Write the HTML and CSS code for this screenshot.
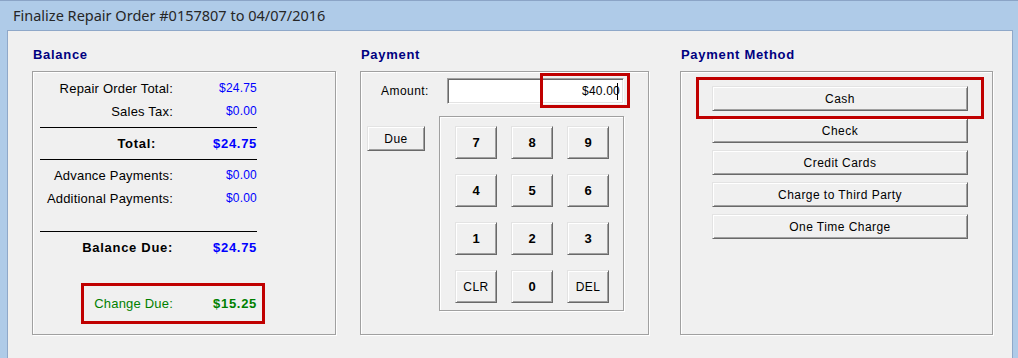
FILE: index.html
```html
<!DOCTYPE html>
<html>
<head>
<meta charset="utf-8">
<title>Finalize Repair Order</title>
<link rel="stylesheet" href="styles.css">
</head>
<body>
<div class="frame">
  <div class="titlebar">Finalize Repair Order #0157807 to 04/07/2016</div>
  <div class="client">
    <section class="group col-balance">
      <h2 class="group-title">Balance</h2>
      <div class="group-box">
        <div class="bal">
          <div class="row"><span class="lbl">Repair Order Total:</span><span class="val">$24.75</span></div>
          <div class="row"><span class="lbl">Sales Tax:</span><span class="val">$0.00</span></div>
          <div class="rule r1"></div>
          <div class="row strong r-after"><span class="lbl lbl-total">Total:</span><span class="val">$24.75</span></div>
          <div class="rule r1"></div>
          <div class="row r-after"><span class="lbl">Advance Payments:</span><span class="val">$0.00</span></div>
          <div class="row"><span class="lbl">Additional Payments:</span><span class="val">$0.00</span></div>
          <div class="rule r2"></div>
          <div class="row strong r-after"><span class="lbl">Balance Due:</span><span class="val">$24.75</span></div>
          <div class="change">
            <span class="lbl">Change Due:</span><span class="val">$15.25</span>
          </div>
        </div>
      </div>
    </section>

    <section class="group col-payment">
      <h2 class="group-title">Payment</h2>
      <div class="group-box pay">
        <div class="amount-row">
          <span class="amount-label">Amount:</span>
          <div class="amount-wrap">
            <div class="amount-field"><span>$40.00</span><span class="caret"></span></div>
            <div class="highlight hl-amount"></div>
          </div>
        </div>
        <div class="pad-row">
          <button class="btn due">Due</button>
          <div class="keypad">
            <button class="btn key num">7</button>
            <button class="btn key num">8</button>
            <button class="btn key num">9</button>
            <button class="btn key num">4</button>
            <button class="btn key num">5</button>
            <button class="btn key num">6</button>
            <button class="btn key num">1</button>
            <button class="btn key num">2</button>
            <button class="btn key num">3</button>
            <button class="btn key">CLR</button>
            <button class="btn key num">0</button>
            <button class="btn key">DEL</button>
          </div>
        </div>
      </div>
    </section>

    <section class="group col-method">
      <h2 class="group-title">Payment Method</h2>
      <div class="group-box methods">
        <div class="method-wrap">
          <button class="btn method">Cash</button>
          <div class="highlight hl-cash"></div>
        </div>
        <button class="btn method">Check</button>
        <button class="btn method">Credit Cards</button>
        <button class="btn method">Charge to Third Party</button>
        <button class="btn method">One Time Charge</button>
      </div>
    </section>
  </div>
</div>
</body>
</html>
```
FILE: styles.css
```css
* { box-sizing: border-box; }

html, body {
  margin: 0;
  padding: 0;
  height: 358px;
  overflow: hidden;
}

body {
  background: #afcbe8;
  font-family: "Liberation Sans", Arial, sans-serif;
  font-size: 12px;
  letter-spacing: 0.45px;
  color: #000;
}

.frame {
  height: 358px;
  border-top: 1px solid #8ba4c6;
  padding: 0 5px 0 7px;
  display: flex;
  flex-direction: column;
}

.titlebar {
  height: 29px;
  line-height: 29px;
  padding-left: 6px;
  font-family: "Noto Sans", "Open Sans", sans-serif;
  font-size: 14.5px;
  letter-spacing: 0;
  color: #262626;
  white-space: nowrap;
}

.client {
  flex: 1;
  background: #f0f0f0;
  border: 1px solid #8fa8c9;
  border-bottom: 0;
  display: flex;
  padding: 16px 0 0 24px;
  gap: 24px;
}

.col-balance { width: 304px; }
.col-payment { width: 289px; }
.col-method { width: 313px; margin-left: 7px; }

.group-title {
  margin: 0 0 8px 1px;
  height: 16px;
  line-height: 16px;
  font-size: 13px;
  font-weight: bold;
  letter-spacing: 0.7px;
  color: #000080;
}

.group-box {
  height: 264px;
  border: 1px solid #a0a0a0;
  box-shadow: 1px 1px 0 #fff, inset 1px 1px 0 #fff;
}

/* Balance */
.bal {
  padding: 5px 0 0 7px;
}

.row {
  display: grid;
  grid-template-columns: 133px 84px;
  height: 23px;
  line-height: 23px;
}

.lbl {
  text-align: right;
  white-space: nowrap;
  font-size: 13px;
  letter-spacing: 0.2px;
}
.val {
  text-align: right;
  color: #0000ff;
  white-space: nowrap;
  letter-spacing: 0.2px;
}

.row.strong .lbl,
.row.strong .val {
  font-size: 13px;
  font-weight: bold;
  letter-spacing: 0.7px;
}

.lbl-total { padding-right: 17px; }

.rule {
  width: 217px;
  height: 1px;
  background: #000;
}
.rule.r1 { margin-top: 4px; }
.rule.r2 { margin-top: 21px; }
.r-after { margin-top: 4px; }

.change {
  margin: 24px 0 0 41px;
  width: 184px;
  height: 41px;
  border: 3px solid #c00000;
  display: grid;
  grid-template-columns: 89px 84px;
  line-height: 35px;
  color: #008000;
}
.change .val {
  color: #008000;
  font-size: 13px;
  font-weight: bold;
  letter-spacing: 0.7px;
}

/* Payment */
.pay {
  padding-top: 6px;
}

.amount-row {
  display: flex;
  align-items: center;
}

.amount-label {
  margin-left: 20px;
  width: 66px;
}

.amount-wrap {
  position: relative;
}

.amount-field {
  width: 177px;
  height: 26px;
  background: #fff;
  border-top: 1px solid #a0a0a0;
  border-left: 1px solid #a0a0a0;
  border-bottom: 1px solid #fff;
  border-right: 1px solid #fff;
  box-shadow: inset 1px 1px 0 #696969, inset -1px -1px 0 #e3e3e3;
  display: flex;
  align-items: center;
  justify-content: flex-end;
  padding-right: 5px;
  letter-spacing: 0.2px;
}

.caret {
  width: 1px;
  height: 17px;
  background: #000;
  margin-left: -3px;
}

.highlight {
  position: absolute;
  border: 3px solid #c00000;
  pointer-events: none;
}

.hl-amount {
  left: 93px;
  top: -5px;
  width: 90px;
  height: 35px;
}

.pad-row {
  display: flex;
  align-items: flex-start;
  margin-top: 12px;
}

.btn {
  font: inherit;
  letter-spacing: inherit;
  color: #000;
  background: #f0f0f0;
  border: 1px solid;
  border-color: #e3e3e3 #696969 #696969 #e3e3e3;
  box-shadow: inset 1px 1px 0 #fff, inset -1px -1px 0 #a0a0a0;
  padding: 0;
  margin: 0;
  border-radius: 0;
}

.due {
  margin: 10px 0 0 6px;
  width: 58px;
  height: 25px;
}

.keypad {
  margin-left: 14px;
  width: 185px;
  height: 195px;
  border: 1px solid #a0a0a0;
  box-shadow: 1px 1px 0 #fff, inset 1px 1px 0 #fff;
  padding: 9px 0 0 15px;
  display: grid;
  grid-template-columns: repeat(3, 42px);
  grid-auto-rows: 33px;
  column-gap: 14px;
  row-gap: 15px;
}

.key.num {
  font-size: 13px;
  font-weight: bold;
  letter-spacing: 0;
}

/* Payment method */
.methods {
  padding: 14px 0 0 31px;
  display: flex;
  flex-direction: column;
  gap: 7px;
}

.method-wrap {
  position: relative;
  width: 256px;
}

.method {
  width: 256px;
  height: 25px;
}

.hl-cash {
  left: -16px;
  top: -9px;
  width: 288px;
  height: 42px;
}
```
